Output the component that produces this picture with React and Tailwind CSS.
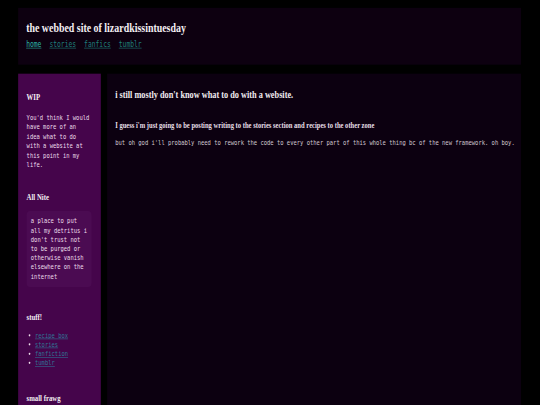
import React from "react";

const serif = "font-['Liberation_Serif','Times_New_Roman',serif] font-bold";
const mono = "font-['DejaVu_Sans_Mono','Liberation_Mono',monospace]";

const navLinks = [
  { label: "home", active: true },
  { label: "stories" },
  { label: "fanfics" },
  { label: "tumblr" },
];

const stuffLinks = ["recipe box", "stories", "fanfiction", "tumblr"];

const Header = () => (
  <header className="bg-[#0d0010] h-[101px] pt-[21px] pl-[19px]">
    <h1 className={`${serif} text-[23.5px] leading-[28px] text-[#f3eef3]`}>
      the webbed site of lizardkissintuesday
    </h1>
    <nav className={`${mono} mt-[5px] flex gap-[19px] text-[15px] leading-[20px]`}>
      {navLinks.map((l) => (
        <a
          key={l.label}
          href="#"
          className={`underline underline-offset-2 ${
            l.active ? "text-[#2bb6a8]" : "text-[#1f7f7a]"
          }`}
        >
          {l.label}
        </a>
      ))}
    </nav>
  </header>
);

const Sidebar = () => (
  <aside className="bg-[#45054b] px-[20px] pt-[31px] pb-[60px]">
    {/* WIP */}
    <h3 className={`${serif} text-[16px] leading-[20px] text-[#f3eef3]`}>WIP</h3>
    <p className={`${mono} mt-[20px] text-[13px] leading-[16.4px] text-[#ecdcea]`}>
      You'd think I would have more of an idea what to do with a website at this
      point in my life.
    </p>

    {/* All Nite */}
    <h3 className={`${serif} mt-[40px] text-[16px] leading-[20px] text-[#f3eef3]`}>
      All Nite
    </h3>
    <div className="mt-[15px] w-[154px] rounded-[8px] bg-[#4b0b52] px-[10px] py-[10px]">
      <p className={`${mono} text-[13px] leading-[16.4px] text-[#ecdcea]`}>
        a place to put all my detritus i don't trust not to be purged or otherwise
        vanish elsewhere on the internet
      </p>
    </div>

    {/* stuff! */}
    <h3 className={`${serif} mt-[43px] text-[16px] leading-[20px] text-[#f3eef3]`}>
      stuff!
    </h3>
    <ul
      className={`${mono} mt-[15px] list-disc pl-[20px] text-[13px] leading-[16.2px] text-[#ecdcea]`}
    >
      {stuffLinks.map((s) => (
        <li key={s}>
          <a href="#" className="text-[#2f7595] underline underline-offset-2">
            {s}
          </a>
        </li>
      ))}
    </ul>

    <h3 className={`${serif} mt-[44px] text-[16px] leading-[20px] text-[#f3eef3]`}>
      small frawg
    </h3>
  </aside>
);

const Main = () => (
  <main className="bg-[#0c0010] pl-[19px] pr-[6px] pt-[26px]">
    <h2 className={`${serif} text-[19.6px] leading-[24px] text-[#f1ecf1]`}>
      i still mostly don't know what to do with a website.
    </h2>
    <h3 className={`${serif} mt-[31px] text-[15.6px] leading-[20px] text-[#e6dfe6]`}>
      I guess i'm just going to be posting writing to the stories section and
      recipes to the other zone
    </h3>
    <p className={`${mono} mt-[14px] text-[13px] leading-[16.4px] text-[#cfc6cf]`}>
      but oh god i'll probably need to rework the code to every other part of this
      whole thing bc of the new framework. oh boy.
    </p>
  </main>
);

export default function App() {
  return (
    <div className="w-[540px] h-[405px] overflow-hidden bg-black">
      {/* page laid out at 1280 wide, squeezed to the 540x405 shot */}
      <div className="w-[1280px] origin-top-left scale-x-[0.421875] scale-y-[0.5625] pt-[14px] pl-[43px]">
        <div className="w-[1192px]">
          <Header />
          <div className="mt-[16px] grid grid-cols-[196px_1fr] gap-[15px]">
            <Sidebar />
            <Main />
          </div>
        </div>
      </div>
    </div>
  );
}
